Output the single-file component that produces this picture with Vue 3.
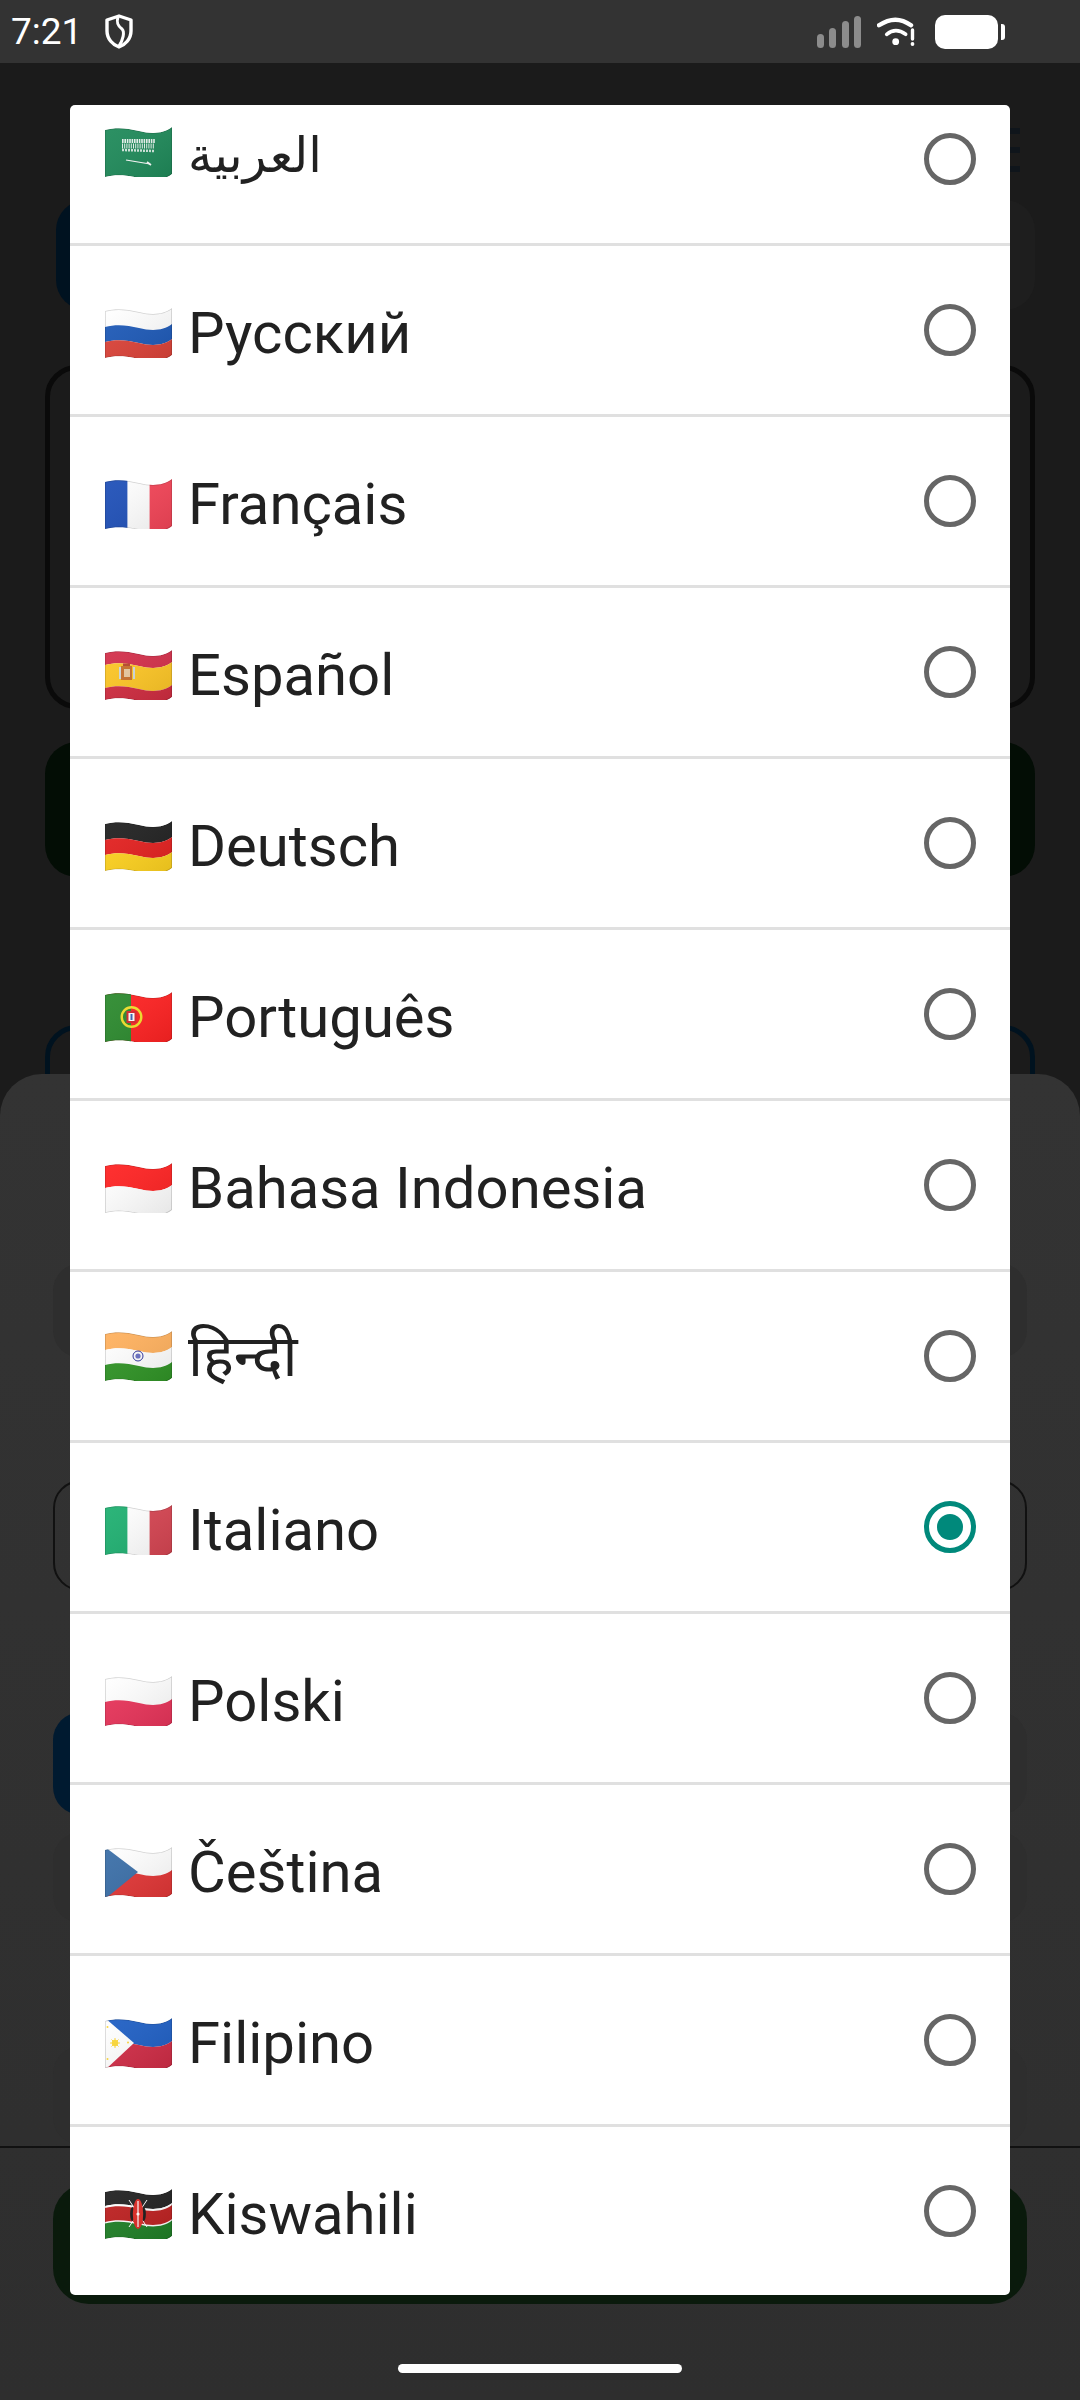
<template>
  <div class="screen">
    <div class="statusbar">
      <span class="time">7:21</span>
      <svg class="shield" viewBox="0 0 30 35" fill="none" stroke="#fff" stroke-width="3.4" stroke-linejoin="round">
        <path d="M15 2L27 6V17C27 25 21 31 15 33C9 31 3 25 3 17V6Z" />
        <path d="M14 3C12 9 14 12 18 15C21 18 19 26 15 32" stroke-width="3" />
      </svg>
      <div class="status-right">
        <div class="signal">
          <i class="b1"></i><i class="b2"></i><i class="b3"></i><i class="b4"></i>
        </div>
        <svg class="wifi" viewBox="0 0 40 30" fill="none" stroke="#fff" stroke-linecap="round">
          <path d="M2 8.3Q18.7 -3 34 8.3" stroke-width="4.4" />
          <path d="M9.7 17.3Q18.7 10 28.7 17.3" stroke-width="3.6" />
          <circle cx="18.7" cy="24.7" r="3.4" fill="#fff" stroke="none" />
          <path d="M35.5 13V22" stroke-width="3.4" />
          <circle cx="35.5" cy="27" r="1.9" fill="#fff" stroke="none" />
        </svg>
        <div class="battery"></div>
        <div class="battery-tip"></div>
      </div>
    </div>

    <!-- dimmed page behind the sheet -->
    <div class="page">
      <div class="top-icon"><i></i><i></i><i></i></div>
      <div class="top-buttons">
        <div class="dim-blue"></div>
        <div class="dim-grey"></div>
      </div>
      <div class="outlined"></div>
      <div class="dim-green"></div>
      <div class="outlined-blue"></div>
    </div>

    <div class="sheet">
      <div class="faint f1"></div>
      <div class="field"></div>
      <div class="sheet-buttons">
        <div class="sheet-blue"></div>
        <div class="faint"></div>
      </div>
      <div class="faint f2"></div>
      <div class="faint f3"></div>
      <div class="hairline"></div>
      <div class="sheet-green"></div>
    </div>

    <div class="dialog">
      <div class="list">
        <div v-for="lang in languages" :key="lang.id" class="row" :class="'row-' + lang.id">
          <svg class="flag" viewBox="0 0 67 50">
            <defs>
              <clipPath :id="'clip-' + lang.id"><path :d="outline" /></clipPath>
              <linearGradient :id="'shade-' + lang.id" x1="0" y1="0" x2="1" y2="1">
                <stop offset="0" stop-color="#fff" stop-opacity="0.06" />
                <stop offset="1" stop-color="#000" stop-opacity="0.1" />
              </linearGradient>
            </defs>
            <g :clip-path="'url(#clip-' + lang.id + ')'">
              <component :is="s.t" v-for="(s, i) in flags[lang.id]" :key="i" v-bind="s.a" />
              <path :d="outline" :fill="'url(#shade-' + lang.id + ')'" />
              <path :d="outline" fill="none" stroke="#000" stroke-opacity="0.16" stroke-width="1.6" />
            </g>
          </svg>
          <span class="label">{{ lang.label }}</span>
          <span class="radio" :class="{ checked: lang.id === selected }"></span>
        </div>
      </div>
    </div>

    <div class="home-bar"></div>
  </div>
</template>

<script setup>
const selected = 'it'

const languages = [
  { id: 'ar', label: 'العربية' },
  { id: 'ru', label: 'Русский' },
  { id: 'fr', label: 'Français' },
  { id: 'es', label: 'Español' },
  { id: 'de', label: 'Deutsch' },
  { id: 'pt', label: 'Português' },
  { id: 'id', label: 'Bahasa Indonesia' },
  { id: 'hi', label: 'हिन्दी' },
  { id: 'it', label: 'Italiano' },
  { id: 'pl', label: 'Polski' },
  { id: 'cs', label: 'Čeština' },
  { id: 'fil', label: 'Filipino' },
  { id: 'sw', label: 'Kiswahili' }
]

// waved stripe, y0 and y1 run from 0 to 47 over the flag height
const band = (y0, y1) => {
  const a = y0 + 3
  const b = y1 + 3
  return `M0 ${a}C11 ${a - 3} 22 ${a - 2} 34 ${a + 1}C46 ${a + 4} 58 ${a + 4} 67 ${a - 3}` +
    `L67 ${b - 3}C58 ${b + 4} 46 ${b + 4} 34 ${b + 1}C22 ${b - 2} 11 ${b - 3} 0 ${b}Z`
}
const outline = band(0, 47)

const s = (y0, y1, fill) => ({ t: 'path', a: { d: band(y0, y1), fill } })
const col = (x, width, fill) => ({ t: 'rect', a: { x, y: 0, width, height: 50, fill } })
const rect = (x, y, width, height, fill) => ({ t: 'rect', a: { x, y, width, height, fill } })
const circle = (cx, cy, r, fill, extra = {}) => ({ t: 'circle', a: { cx, cy, r, fill, ...extra } })
const ellipse = (cx, cy, rx, ry, fill) => ({ t: 'ellipse', a: { cx, cy, rx, ry, fill } })
const line = (x1, y1, x2, y2, stroke, width, extra = {}) => ({
  t: 'line',
  a: { x1, y1, x2, y2, stroke, 'stroke-width': width, ...extra }
})
const poly = (points, fill) => ({ t: 'polygon', a: { points, fill } })

const flags = {
  ar: [
    s(0, 47, '#1f8a5a'),
    line(17, 14, 50, 14, '#fff', 4, { 'stroke-dasharray': '1.6 .8', opacity: 0.9 }),
    line(17, 19, 50, 19, '#fff', 5, { 'stroke-dasharray': '1 1.2', opacity: 0.9 }),
    line(17, 23, 50, 24, '#fff', 2.5, { 'stroke-dasharray': '2 1', opacity: 0.8 }),
    line(21, 33, 45, 37, '#fff', 1.2),
    line(42, 35, 46, 38, '#fff', 1.6)
  ],
  ru: [s(0, 16, '#fff'), s(16, 31, '#1e5ab8'), s(31, 47, '#dc4339')],
  fr: [s(0, 47, '#fff'), col(0, 22.4, '#1f50b8'), col(44.6, 23, '#f44558')],
  es: [
    s(0, 12, '#d32f4a'), s(12, 35, '#fdc625'), s(35, 47, '#d02c40'),
    rect(16, 16, 11, 14, '#c9702c'),
    rect(19, 19, 6, 8, '#e9c9a0'),
    rect(14, 17, 2, 12, '#cfd8dc'), rect(28, 17, 2, 12, '#cfd8dc'),
    rect(18, 13.5, 7, 2.5, '#b7472a')
  ],
  de: [s(0, 16, '#212121'), s(16, 31, '#e42120'), s(31, 47, '#fed21f')],
  pt: [
    s(0, 47, '#ff2222'), col(0, 26, '#2c8a2e'),
    circle(26.5, 25, 9.8, 'none', { stroke: '#f3e02a', 'stroke-width': 2.4 }),
    rect(21.5, 19, 10, 12, '#d8262c'),
    rect(23.5, 21, 6, 8, '#fff'),
    rect(25.5, 22, 2, 6, '#3b62b5')
  ],
  id: [s(0, 22, '#ff2323'), s(22, 47, '#fff')],
  hi: [
    s(0, 16, '#ffb15e'), s(16, 31, '#fff'), s(31, 47, '#309426'),
    circle(33, 25, 5, 'none', { stroke: '#2b2f9c', 'stroke-width': 1 }),
    circle(33, 25, 2.6, '#6a70c4')
  ],
  it: [s(0, 47, '#fff'), col(0, 22.4, '#1fb071'), col(44.6, 23, '#d64552')],
  pl: [s(0, 23, '#fff'), s(23, 47, '#e8345a')],
  cs: [
    s(0, 23, '#fff'), s(23, 47, '#e23636'),
    poly('0,0 33,25 0,52', '#3b6fa8')
  ],
  fil: [
    s(0, 23, '#1f5fc4'), s(23, 47, '#d02c46'),
    poly('0,0 29,25 0,52', '#fff'),
    line(5, 25, 15, 25, '#fdd835', 1), line(10, 20, 10, 30, '#fdd835', 1),
    line(6.5, 21.5, 13.5, 28.5, '#fdd835', 1), line(13.5, 21.5, 6.5, 28.5, '#fdd835', 1),
    circle(10, 25, 3.2, '#fdd835'),
    circle(2.5, 9, 1, '#fdd835'), circle(2.5, 41, 1, '#fdd835'), circle(23, 24.5, 1, '#fdd835')
  ],
  sw: [
    s(0, 14, '#212121'), s(14, 31.5, '#fff'), s(16, 30, '#bd2020'), s(31.5, 47, '#1f7f26'),
    line(24, 11, 42, 38, '#fff', 1), line(42, 11, 24, 38, '#fff', 1),
    ellipse(27.5, 25, 2.4, 7, '#1a1a1a'), ellipse(38.5, 25, 2.4, 7, '#1a1a1a'),
    ellipse(33, 25, 5.2, 15, '#de2a24'),
    rect(32.4, 12, 1.2, 26, '#fff'),
    circle(33, 25, 1.6, '#fff')
  ]
}
</script>

<style>
html,
body {
  margin: 0;
  background: #1c1c1c;
}
</style>

<style scoped>
.screen {
  position: relative;
  width: 1080px;
  height: 2400px;
  overflow: hidden;
  background: #1b1b1b;
  font-family: Roboto, "Noto Sans", "DejaVu Sans", sans-serif;
}

.statusbar {
  height: 63px;
  background: #333;
  display: flex;
  align-items: center;
  padding-left: 11px;
  box-sizing: border-box;
}

.time {
  color: #fff;
  font-size: 37px;
  line-height: 63px;
}

.shield {
  width: 30px;
  height: 35px;
  margin-left: 22px;
}

.status-right {
  margin-left: auto;
  margin-right: 75px;
  display: flex;
  align-items: center;
}

.signal {
  display: flex;
  align-items: flex-end;
  gap: 5.5px;
  height: 32px;
  margin-right: 16px;
}

.signal i {
  width: 7px;
  border-radius: 4px;
  background: #8c8c8c;
}

.b1 { height: 14px; }
.b2 { height: 20px; }
.b3 { height: 27px; }
.b4 { height: 32px; }

.wifi {
  width: 40px;
  height: 30px;
  margin-right: 18px;
}

.battery {
  width: 63px;
  height: 34px;
  border-radius: 10px;
  background: #fff;
}

.battery-tip {
  width: 4px;
  height: 16px;
  margin-left: 3px;
  border-radius: 0 3px 3px 0;
  background: #fff;
}

.page {
  padding: 65px 45px 0;
}

.top-icon {
  display: flex;
  flex-direction: column;
  align-items: flex-end;
  gap: 13px;
  height: 72px;
  padding-right: 15px;
  box-sizing: border-box;
}

.top-icon i {
  display: block;
  width: 24px;
  height: 6px;
  background: #0f151b;
}

.top-buttons {
  display: grid;
  grid-template-columns: 1fr 1fr;
  gap: 16px;
  height: 110px;
  padding-left: 11px;
}

.dim-blue {
  background: #001220;
  border-radius: 30px;
}

.dim-grey {
  background: #1e1e1e;
  border-radius: 30px;
}

.outlined {
  margin-top: 55px;
  height: 344px;
  box-sizing: border-box;
  border: 5px solid #0a0a0a;
  border-radius: 32px;
}

.dim-green {
  margin-top: 33px;
  height: 135px;
  background: #030d05;
  border-radius: 32px;
}

.outlined-blue {
  margin-top: 148px;
  height: 200px;
  box-sizing: border-box;
  border: 5px solid #00121f;
  border-radius: 32px;
}

.sheet {
  position: absolute;
  left: 0;
  right: 0;
  top: 1074px;
  bottom: 0;
  padding: 189px 53px 0;
  border-radius: 42px 42px 0 0;
  background: linear-gradient(#333, #2e2e2e);
  display: flex;
  flex-direction: column;
}

.faint {
  background: #2e2e2e;
  border-radius: 28px;
}

.f1 {
  height: 95px;
}

.field {
  margin-top: 122px;
  height: 111px;
  box-sizing: border-box;
  border: 2px solid #111;
  border-radius: 28px;
}

.sheet-buttons {
  margin-top: 121px;
  height: 103px;
  display: grid;
  grid-template-columns: 1fr 1fr;
  gap: 16px;
}

.sheet-blue {
  background: #001a30;
  border-radius: 28px;
}

.f2 {
  margin-top: 17px;
  height: 91px;
}

.f3 {
  margin-top: 123px;
  height: 99px;
}

.hairline {
  margin: 1px -53px 0;
  height: 2px;
  background: #111;
}

.sheet-green {
  margin-top: 35px;
  height: 121px;
  background: #0a1a0c;
  border-radius: 36px;
}

.dialog {
  position: absolute;
  left: 70px;
  top: 105px;
  width: 940px;
  height: 2190px;
  overflow: hidden;
  border-radius: 5px;
  background: #fff;
}

.list {
  margin-top: -30px;
}

.row {
  height: 171px;
  box-sizing: border-box;
  border-bottom: 3px solid #e0e0e0;
  padding: 0 34px 0 35px;
  display: flex;
  align-items: center;
  gap: 16px;
}

.flag {
  width: 67px;
  height: 50px;
  flex: none;
  margin-top: 6px;
}

.label {
  flex: 1;
  padding-top: 5px;
  color: #212121;
  font-size: 58px;
  line-height: 1;
}

.row-ar .flag {
  margin-top: -14px;
}

.row-ar .label {
  padding-top: 0;
  padding-bottom: 8px;
  font-size: 49px;
}

.row-hi .flag {
  margin-top: 0;
}

.row-hi .label {
  padding-top: 0;
}

.radio {
  width: 52px;
  height: 52px;
  flex: none;
  box-sizing: border-box;
  border: 5px solid #666;
  border-radius: 50%;
}

.radio.checked {
  border-color: #00897b;
  display: flex;
  align-items: center;
  justify-content: center;
}

.radio.checked::after {
  content: "";
  width: 26px;
  height: 26px;
  border-radius: 50%;
  background: #00897b;
}

.home-bar {
  position: absolute;
  left: 398px;
  top: 2364px;
  width: 284px;
  height: 9px;
  border-radius: 5px;
  background: #fff;
}
</style>
